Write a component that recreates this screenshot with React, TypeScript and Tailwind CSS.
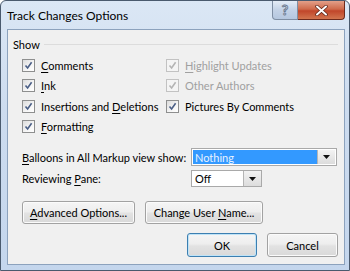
import React from "react";

const Check = ({ checked = true, disabled = false }: { checked?: boolean; disabled?: boolean }) => (
  <div
    className={
      "w-[13px] h-[13px] shrink-0 border flex items-center justify-center " +
      (disabled
        ? "border-[#c2c2c2] bg-[#f4f4f4]"
        : "border-[#8e8f8f] bg-[linear-gradient(135deg,#dcdcdc_0%,#f6f6f6_60%,#ffffff_100%)]")
    }
  >
    {checked && (
      <svg width="9" height="9" viewBox="0 0 9 9">
        <path
          d="M1.5 4.5 L3.6 7 L7.6 1.2"
          fill="none"
          stroke={disabled ? "#b4b4b4" : "#4b5f86"}
          strokeWidth="1.6"
        />
      </svg>
    )}
  </div>
);

const Row = ({
  children,
  checked = true,
  disabled = false,
}: {
  children: React.ReactNode;
  checked?: boolean;
  disabled?: boolean;
}) => (
  <div className="flex items-center gap-[6px] whitespace-nowrap">
    <Check checked={checked} disabled={disabled} />
    <span className={disabled ? "text-[#a0a0a0]" : "text-black"}>{children}</span>
  </div>
);

const U = ({ children }: { children: React.ReactNode }) => <span className="underline underline-offset-[2px]">{children}</span>;

const Btn = ({
  children,
  def = false,
  w,
}: {
  children: React.ReactNode;
  def?: boolean;
  w: string;
}) => (
  <div
    className={
      "rounded-[3px] border flex items-center justify-center whitespace-nowrap bg-[linear-gradient(to_bottom,#f5f5f5_0%,#eeeeee_45%,#e2e2e2_55%,#d9d9d9_100%)] " +
      (def
        ? "border-[#3c7fb1] shadow-[inset_0_0_0_1px_#bfe3f7]"
        : "border-[#a2a2a2] shadow-[inset_0_0_0_1px_#fbfbfb]") +
      " " +
      w
    }
  >
    {children}
  </div>
);

const DropBtn = () => (
  <div className="w-[18px] h-full border-l border-[#b5b5b5] flex items-center justify-center bg-[linear-gradient(to_bottom,#f3f3f3,#dcdcdc)]">
    <svg width="7" height="4" viewBox="0 0 7 4">
      <path d="M0 0 H7 L3.5 4 Z" fill="#111" />
    </svg>
  </div>
);

export default function App() {
  return (
    <div className="w-[350px] h-[271px] font-['Lato',sans-serif] text-[11px] leading-none text-black">
      <div className="w-full h-full flex flex-col border border-[#4a5a6e] rounded-t-[6px] bg-[linear-gradient(to_bottom,#dbe7f5_0%,#cddcef_40%,#c4d6ed_100%)] pl-[6px] pr-[4px] pb-[5px]">
        {/* title bar */}
        <div className="h-[28px] flex items-start justify-between shrink-0">
          <div className="pt-[9px] text-[12px] text-black whitespace-nowrap">Track Changes Options</div>
          <div className="flex">
            <div className="w-[26px] h-[19px] border border-t-0 border-[#7e8ea3] rounded-bl-[4px] bg-[linear-gradient(to_bottom,#e4ecf6,#c3d2e6_50%,#b5c7df)] flex items-center justify-center">
              <span className="text-[14px] font-bold text-white [-webkit-text-stroke:1px_#6a7a92] leading-none">?</span>
            </div>
            <div className="w-[47px] h-[19px] border border-t-0 border-l-0 border-[#6e2a1c] rounded-br-[4px] bg-[linear-gradient(to_bottom,#e3a089,#cf6a4b_45%,#c1462a_55%,#d2754f)] flex items-center justify-center">
              <svg width="13" height="11" viewBox="0 0 13 11">
                <path d="M2 1.5 L11 9.5 M11 1.5 L2 9.5" stroke="#5a2216" strokeWidth="3.4" strokeLinecap="round" />
                <path d="M2 1.5 L11 9.5 M11 1.5 L2 9.5" stroke="#ffffff" strokeWidth="2" strokeLinecap="round" />
              </svg>
            </div>
          </div>
        </div>
        {/* client */}
        <div className="flex-1 border border-[#8ca2bd] bg-[#f0f0f0] flex flex-col">
          {/* Show header */}
          <div className="flex items-center mt-[9px] pl-[5px] pr-[6px] h-[10px]">
            <span className="mr-[4px]">Show</span>
            <div className="flex-1 h-px bg-[#dcdcdc]" />
          </div>
          <div className="grid grid-cols-[144px_1fr] grid-rows-[20px_21px_20px_20px] items-center mt-[6px] pl-[14px]">
            <Row>
              <U>C</U>omments
            </Row>
            <Row disabled>
              <U>H</U>ighlight Updates
            </Row>
            <Row>
              <U>I</U>nk
            </Row>
            <Row disabled>Other Authors</Row>
            <Row>
              Insertions and <U>D</U>eletions
            </Row>
            <Row>Pictures By Comments</Row>
            <Row>
              <U>F</U>ormatting
            </Row>
            <div />
          </div>
          {/* balloons */}
          <div className="flex items-center mt-[12px] pl-[14px] h-[18px] whitespace-nowrap">
            <span className="w-[169px]">
              <U>B</U>alloons in All Markup view show:
            </span>
            <div className="w-[146px] h-[18px] border border-[#a9a9a9] bg-white flex p-px">
              <div className="flex-1 bg-[#3399ff] text-[#e8f3ff] flex items-center pl-[2px]">Nothing</div>
              <DropBtn />
            </div>
          </div>
          <div className="flex items-center mt-[4px] pl-[14px] h-[17px] whitespace-nowrap">
            <span className="w-[169px]">
              Reviewing <U>P</U>ane:
            </span>
            <div className="w-[71px] h-[17px] border border-[#a9a9a9] bg-white flex">
              <div className="flex-1 flex items-center pl-[3px]">Off</div>
              <DropBtn />
            </div>
          </div>
          <div className="flex mt-[14px] pl-[14px] gap-[10px]">
            <Btn w="w-[113px] h-[23px]">
              <span>
                <U>A</U>dvanced Options...
              </span>
            </Btn>
            <Btn w="w-[118px] h-[23px]">
              <span>
                Change User <U>N</U>ame...
              </span>
            </Btn>
          </div>
          <div className="flex justify-end mt-[9px] pr-[6px] gap-[10px]">
            <Btn def w="w-[70px] h-[24px]">OK</Btn>
            <Btn w="w-[71px] h-[24px]">Cancel</Btn>
          </div>
        </div>
      </div>
    </div>
  );
}
